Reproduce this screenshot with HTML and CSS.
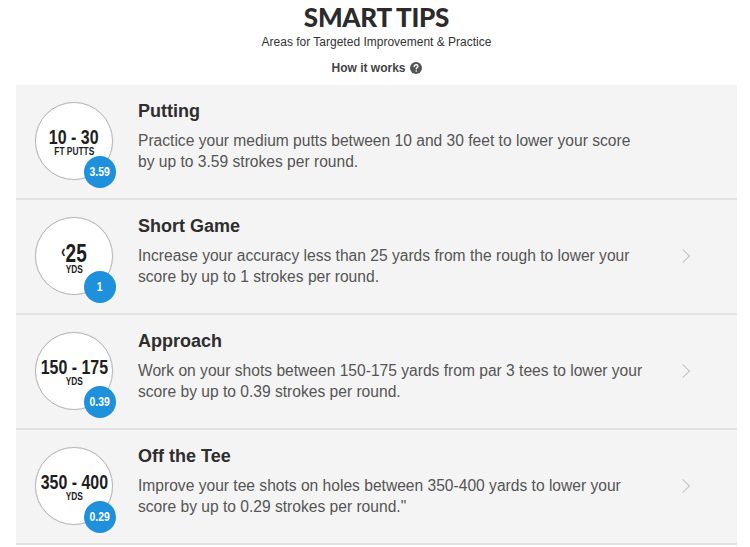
FILE: index.html
```html
<!DOCTYPE html>
<html lang="en">
<head>
    <meta charset="UTF-8">
    <meta name="viewport" content="width=device-width, initial-scale=1.0">
    <title>Smart Tips</title>
    <link rel="stylesheet" href="styles.css">
</head>
<body>
    <!-- Header -->
    <header class="tips-header">
        <h1>SMART TIPS</h1>
        <p class="subtitle">Areas for Targeted Improvement &amp; Practice</p>
        <a class="how-link" href="#">How it works
            <svg class="help-icon" viewBox="0 0 12 12" width="12" height="12">
                <circle cx="6" cy="6" r="6" fill="#555"/>
                <path d="M4.2 4.6c0-1.1.8-1.8 1.9-1.8 1.1 0 1.8.7 1.8 1.5 0 .9-.6 1.2-1.1 1.5-.4.2-.5.4-.5.9" fill="none" stroke="#fff" stroke-width="1.4" stroke-linecap="round"/>
                <circle cx="6.2" cy="9" r=".8" fill="#fff"/>
            </svg>
        </a>
    </header>

    <!-- Tip list -->
    <div class="tips">
        <div class="tip">
            <div class="dial">
                <span class="dial-value">10 - 30</span>
                <span class="dial-unit">FT PUTTS</span>
                <span class="badge"><b>3.59</b></span>
            </div>
            <div class="tip-body">
                <h2>Putting</h2>
                <p>Practice your medium putts between 10 and 30 feet to lower your score by up to 3.59 strokes per round.</p>
            </div>
        </div>

        <div class="tip">
            <div class="dial">
                <span class="dial-value big"><small>&lsaquo;</small>25</span>
                <span class="dial-unit">YDS</span>
                <span class="badge"><b>1</b></span>
            </div>
            <div class="tip-body">
                <h2>Short Game</h2>
                <p>Increase your accuracy less than 25 yards from the rough to lower your score by up to 1 strokes per round.</p>
            </div>
            <span class="chevron"></span>
        </div>

        <div class="tip">
            <div class="dial">
                <span class="dial-value">150 - 175</span>
                <span class="dial-unit">YDS</span>
                <span class="badge"><b>0.39</b></span>
            </div>
            <div class="tip-body">
                <h2>Approach</h2>
                <p>Work on your shots between 150-175 yards from par 3 tees to lower your score by up to 0.39 strokes per round.</p>
            </div>
            <span class="chevron"></span>
        </div>

        <div class="tip">
            <div class="dial">
                <span class="dial-value">350 - 400</span>
                <span class="dial-unit">YDS</span>
                <span class="badge"><b>0.29</b></span>
            </div>
            <div class="tip-body">
                <h2>Off the Tee</h2>
                <p>Improve your tee shots on holes between 350-400 yards to lower your score by up to 0.29 strokes per round."</p>
            </div>
            <span class="chevron"></span>
        </div>
    </div>
</body>
</html>
```

FILE: styles.css
```css
/* General Styles */
body {
    margin: 0;
    padding: 0 13px 0 16px;
    font-family: 'Liberation Sans', Arial, sans-serif;
    background: #fff;
    color: #333;
}

/* Header */
.tips-header {
    text-align: center;
    padding-top: 3px;
}

.tips-header h1 {
    margin: 0;
    font-family: 'Lato', sans-serif;
    font-weight: 900;
    font-size: 26px;
    line-height: 28px;
    letter-spacing: -0.3px;
    color: #2b2b2b;
}

.subtitle {
    margin: 4px 0 0;
    font-size: 12px;
    line-height: 14px;
    color: #333;
}

.how-link {
    display: inline-flex;
    align-items: center;
    gap: 4px;
    margin-top: 12px;
    font-size: 12px;
    font-weight: bold;
    color: #444;
    text-decoration: none;
}

/* Tip cards */
.tips {
    margin-top: 9px;
}

.tip {
    position: relative;
    display: flex;
    align-items: flex-start;
    height: 115px;
    box-sizing: border-box;
    padding: 17px 19px 0;
    background: #f4f4f4;
    border-bottom: 2px solid #e2e2e2;
}

.dial {
    position: relative;
    flex: none;
    width: 78px;
    height: 78px;
    box-sizing: border-box;
    border-radius: 50%;
    background: #fff;
    border: 1px solid #b8b8b8;
    box-shadow: 0 0 1px rgba(0, 0, 0, 0.15);
    display: flex;
    flex-direction: column;
    align-items: center;
    justify-content: center;
    padding-top: 2px;
    font-weight: bold;
    color: #1e1e1e;
    white-space: nowrap;
}

/* condensed look for the dial figures */
.dial-value,
.dial-unit {
    display: block;
    transform: scaleX(0.76);
}

.dial-value {
    font-size: 21px;
    line-height: 19px;
}

.dial-value.big {
    font-size: 25px;
    line-height: 22px;
}

.dial-value small {
    font-size: 18px;
    vertical-align: 5px;
}

.dial-unit {
    font-size: 11px;
    line-height: 11px;
}

.badge {
    position: absolute;
    left: 48px;
    top: 53px;
    width: 32px;
    height: 32px;
    border-radius: 50%;
    background: #1e90dc;
    color: #fff;
    font-size: 13px;
    line-height: 32px;
    text-align: center;
}

.badge b {
    display: inline-block;
    transform: scaleX(0.8);
}

.tip-body {
    margin: -2px 0 0 25px;
    flex: 1;
    max-width: 510px;
}

.tip-body h2 {
    margin: 0;
    font-size: 18px;
    line-height: 22px;
    font-weight: bold;
    color: #2e2e2e;
}

.tip-body p {
    margin: 8px 0 0;
    font-size: 15.6px;
    line-height: 21px;
    color: #555;
}

/* Right arrow */
.chevron {
    position: absolute;
    right: 49px;
    top: 51px;
    width: 9px;
    height: 9px;
    border-top: 1.5px solid #c2c2c2;
    border-right: 1.5px solid #c2c2c2;
    transform: rotate(45deg);
}
```
